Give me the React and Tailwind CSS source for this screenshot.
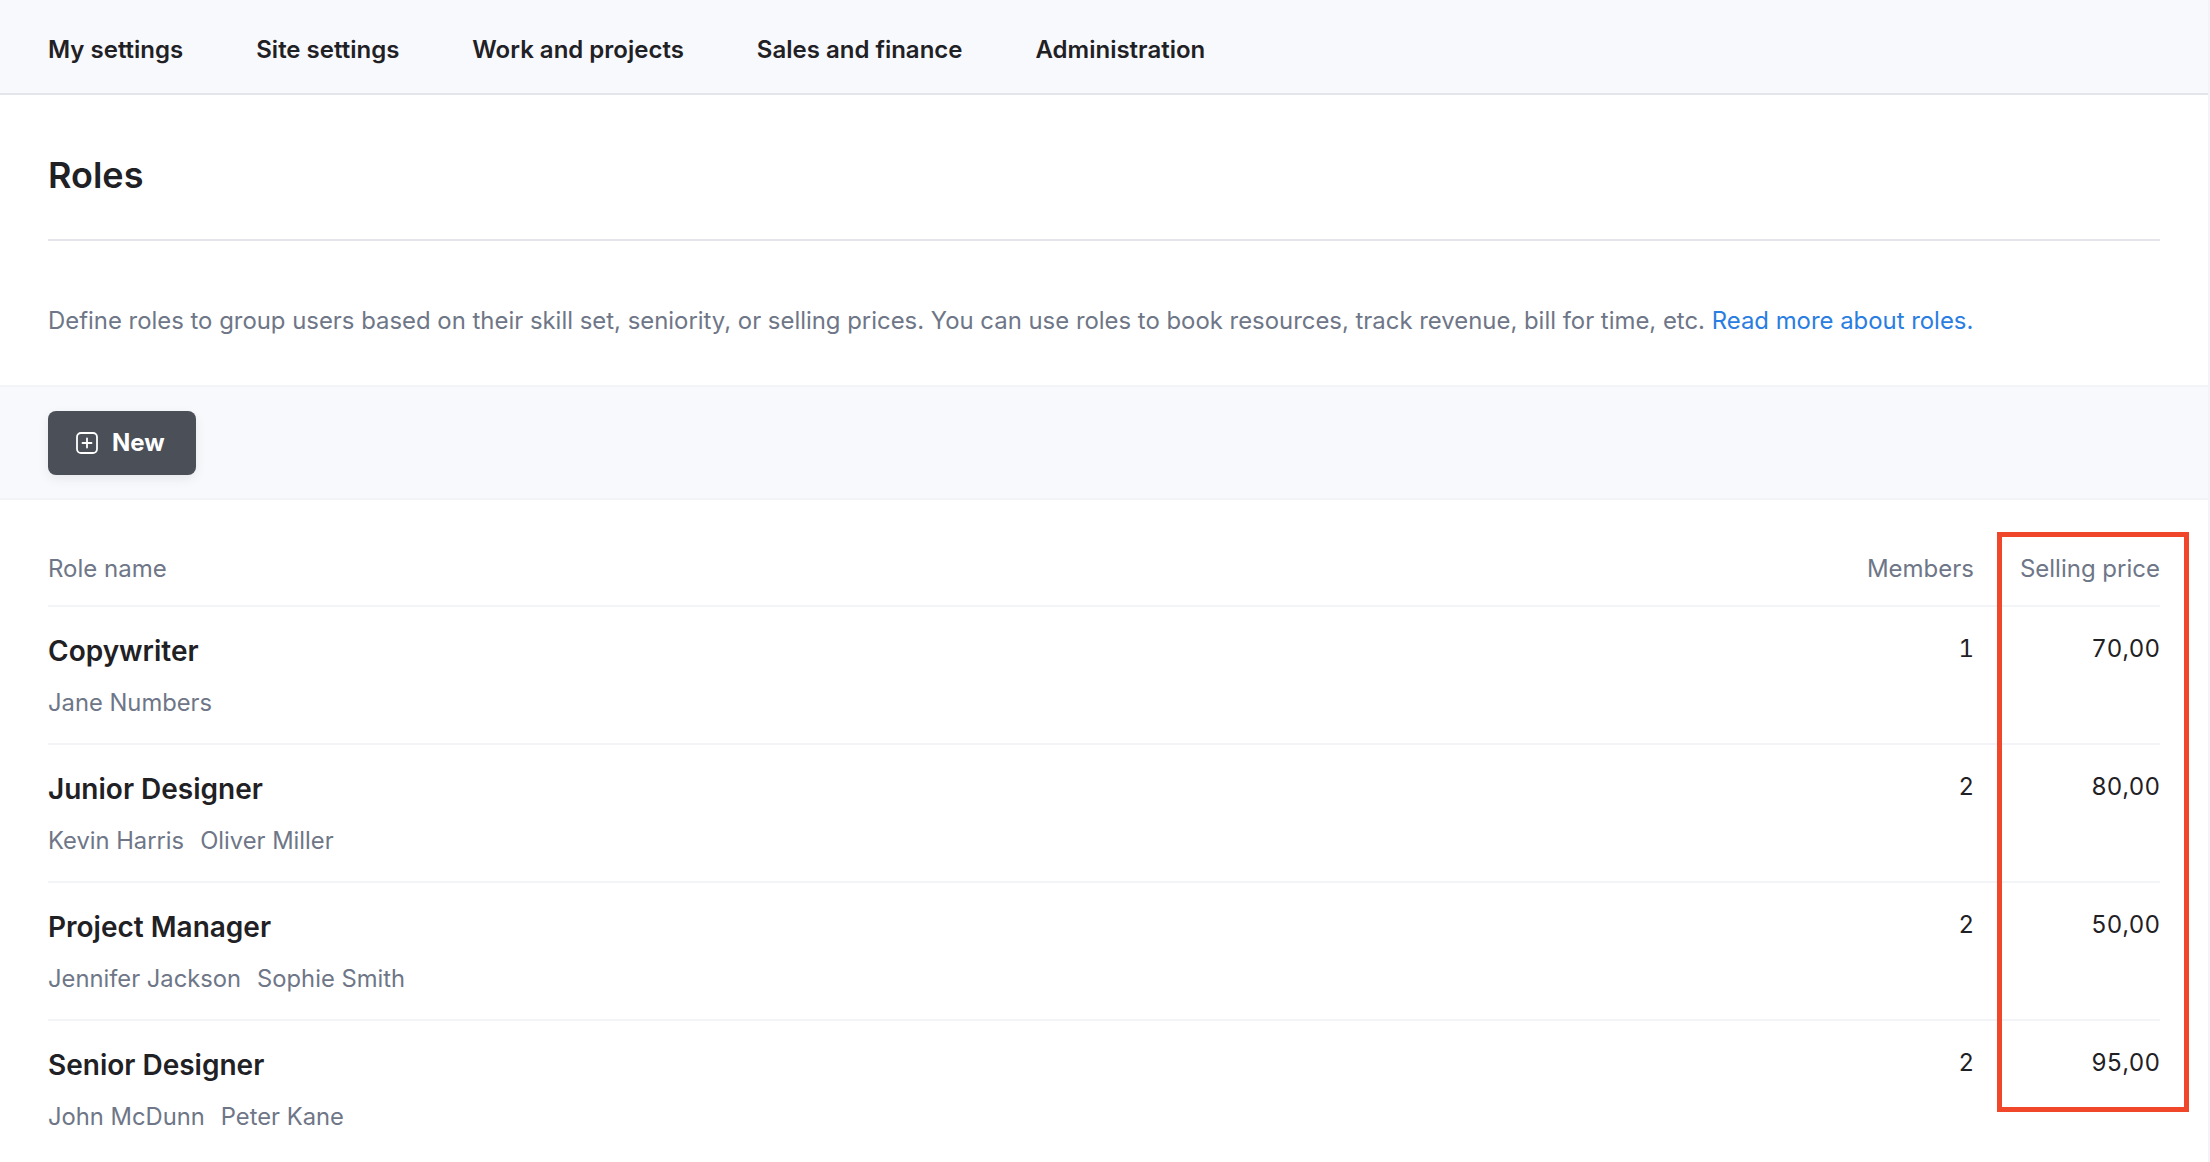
const navItems = ['My settings', 'Site settings', 'Work and projects', 'Sales and finance', 'Administration'];

const roles = [
  { name: 'Copywriter', people: ['Jane Numbers'], members: 1, price: '70,00' },
  { name: 'Junior Designer', people: ['Kevin Harris', 'Oliver Miller'], members: 2, price: '80,00' },
  { name: 'Project Manager', people: ['Jennifer Jackson', 'Sophie Smith'], members: 2, price: '50,00' },
  { name: 'Senior Designer', people: ['John McDunn', 'Peter Kane'], members: 2, price: '95,00' },
];

function PlusIcon() {
  return (
    <svg className="w-[22px] h-[22px]" viewBox="0 0 22 22" fill="none" stroke="currentColor" strokeWidth="1.8" strokeLinecap="round">
      <rect x="1" y="1" width="20" height="20" rx="4" />
      <path d="M11 6.5v9M6.5 11h9" />
    </svg>
  );
}

export default function App() {
  return (
    <div className="relative h-[1162px] overflow-hidden bg-white border-r-2 border-[#f3f4f8] font-['Inter',sans-serif] text-2xl text-[#1f2125]">
      <nav className="flex items-center gap-[73px] h-[95px] px-12 pt-[7px] bg-[#f8f9fd] border-b-2 border-[#e4e5ea] font-semibold">
        {navItems.map((item) => (
          <a key={item}>{item}</a>
        ))}
      </nav>

      <div className="px-12">
        <h1 className="h-[146px] pt-[53px] border-b-2 border-[#e4e5ea] font-semibold text-[36px] leading-[54px]">Roles</h1>
        <p className="h-[144px] pt-[63px] text-[23.9px] leading-[34px] text-[#6e7687]">
          Define roles to group users based on their skill set, seniority, or selling prices. You can use roles to book resources, track revenue, bill for time, etc.{' '}
          <a className="text-[#2a7de1]">Read more about roles.</a>
        </p>
      </div>

      <div className="flex items-center h-[115px] px-12 bg-[#f8f9fc] border-y-2 border-[#f3f4f8]">
        <button className="flex items-center gap-[14px] h-16 pl-7 pr-[31px] rounded-lg bg-[#4b4f58] text-white font-bold shadow-[0_4px_12px_rgba(0,0,0,0.07)]">
          <PlusIcon />
          New
        </button>
      </div>

      <div className="px-12">
        <div className="flex items-center h-[107px] pt-[32px] border-b-2 border-[#f3f4f8] text-[#6e7687]">
          <div className="flex-1">Role name</div>
          <div className="w-[120px] text-right">Members</div>
          <div className="w-[186px] text-right">Selling price</div>
        </div>
        {roles.map((role) => (
          <div key={role.name} className="flex h-[138px] pt-[24px] border-b-2 border-[#f3f4f8] last:border-b-0">
            <div className="flex-1">
              <div className="font-semibold text-[28px] leading-[40px]">{role.name}</div>
              <div className="flex gap-4 mt-[15px] text-[23.75px] leading-[34px] text-[#6e7687]">
                {role.people.map((person) => (
                  <span key={person}>{person}</span>
                ))}
              </div>
            </div>
            <div className="w-[120px] pt-px text-right leading-[34px] tabular-nums">{role.members}</div>
            <div className="w-[186px] pt-px text-right leading-[34px] tabular-nums">{role.price}</div>
          </div>
        ))}
      </div>

      <div className="absolute left-[1997px] top-[532px] w-[192px] h-[580px] border-[5px] border-[#f0472a]" />
    </div>
  );
}
